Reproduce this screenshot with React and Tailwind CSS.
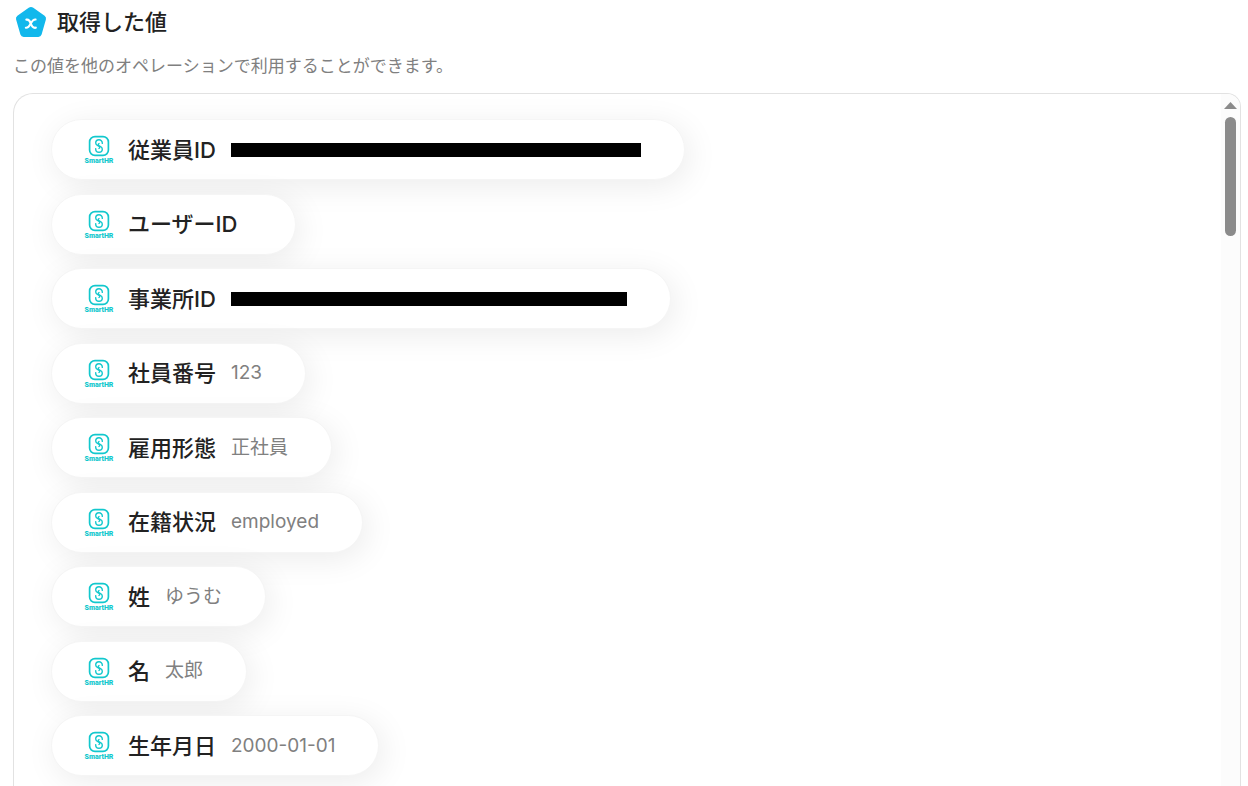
const items = [
  { name: '従業員ID', redacted: 'w-[410px]' },
  { name: 'ユーザーID' },
  { name: '事業所ID', redacted: 'w-[396px]' },
  { name: '社員番号', value: '123' },
  { name: '雇用形態', value: '正社員' },
  { name: '在籍状況', value: 'employed' },
  { name: '姓', value: 'ゆうむ' },
  { name: '名', value: '太郎' },
  { name: '生年月日', value: '2000-01-01' },
];

function PentagonIcon() {
  return (
    <svg width="32" height="32" viewBox="0 0 32 32" aria-hidden="true">
      <path
        d="M13.7 1.8 Q16 0.4 18.3 1.8 L29.6 9.7 Q31.6 11.2 30.9 13.4 L26.6 28.6 Q25.8 31 23.3 31 L8.7 31 Q6.2 31 5.4 28.6 L1.1 13.4 Q0.4 11.2 2.4 9.7 Z"
        fill="#12b8ec"
      />
      <path
        d="M11.4 13.6 C14.4 13 15 15.1 15.8 17.5 C16.6 19.9 17.6 22.3 20.8 21.7"
        fill="none"
        stroke="#fff"
        strokeWidth="2.2"
        strokeLinecap="round"
      />
      <path
        d="M20.6 13.6 C18.2 13.2 17 15.4 15.8 17.5 C14.6 19.7 13.4 22.1 10.8 21.7"
        fill="none"
        stroke="#fff"
        strokeWidth="2"
        strokeLinecap="round"
      />
    </svg>
  );
}

function SmartHRLogo() {
  return (
    <span className="flex w-7 shrink-0 flex-col items-center pt-px text-[#12c8cd]">
      <svg width="22" height="22" viewBox="0 0 22 22" fill="none" stroke="currentColor" aria-hidden="true">
        <rect x="1.6" y="1.6" width="18.8" height="18.8" rx="5.4" strokeWidth="1.7" />
        <path
          d="M14.3 8.4 V8 A3.3 3.3 0 0 0 7.7 8 C7.7 10.2 9.4 10.5 10.8 11.1 C12 11.6 12.1 12.9 11 13.4"
          strokeWidth="1.4"
          strokeLinecap="round"
        />
        <path
          d="M7.7 13.6 V14 A3.3 3.3 0 0 0 14.3 14 C14.3 11.8 12.6 11.5 11.2 10.9 C10 10.4 9.9 9.1 11 8.6"
          strokeWidth="1.4"
          strokeLinecap="round"
        />
      </svg>
      <span className="font-[Roboto,sans-serif] text-[7px] leading-[8px] font-black">SmartHR</span>
    </span>
  );
}

function Chip({ name, value, redacted }) {
  return (
    <li className="flex h-[61px] w-fit items-center gap-[15px] rounded-full border border-[#f5f5f5] bg-white pr-[43px] pl-[33px] shadow-[4px_6px_32px_rgba(0,0,0,0.08)]">
      <SmartHRLogo />
      <span className="text-[22px] leading-8 font-medium whitespace-nowrap text-[#222]">{name}</span>
      <span className="text-[19px] leading-7 whitespace-nowrap text-[#808080]">
        {redacted ? <span className={`block h-[14px] bg-black ${redacted}`} /> : value}
      </span>
    </li>
  );
}

function Scrollbar() {
  return (
    <div className="flex w-[19px] shrink-0 flex-col items-center gap-2 bg-[#fcfcfc] pt-2" aria-hidden="true">
      <svg width="13" height="7" viewBox="0 0 13 7">
        <path d="M6.5 0 L13 7 H0 Z" fill="#8b8b8b" />
      </svg>
      <div className="h-[119px] w-[11px] rounded-full bg-[#8b8b8b]" />
    </div>
  );
}

export default function App() {
  return (
    <main className="flex min-h-screen flex-col bg-white pr-[7px] pl-[13px] font-[Inter,'Noto_Sans_CJK_JP',sans-serif]">
      <header className="flex items-center gap-[10px] pt-[6px] pl-[2px]">
        <PentagonIcon />
        <h1 className="text-[22px] leading-8 font-medium text-[#222]">取得した値</h1>
      </header>
      <p className="mt-4 text-[17px] leading-6 text-[#808080]">この値を他のオペレーションで利用することができます。</p>
      <section className="mt-[15px] flex flex-1 overflow-hidden rounded-tl-[20px] rounded-tr-[14px] border border-b-0 border-[#e2e2e2]">
        <ul className="flex flex-1 flex-col justify-between gap-3 overflow-hidden pt-[25px] pb-[10px] pl-[37px]">
          {items.map((item) => (
            <Chip key={item.name} {...item} />
          ))}
        </ul>
        <Scrollbar />
      </section>
    </main>
  );
}
